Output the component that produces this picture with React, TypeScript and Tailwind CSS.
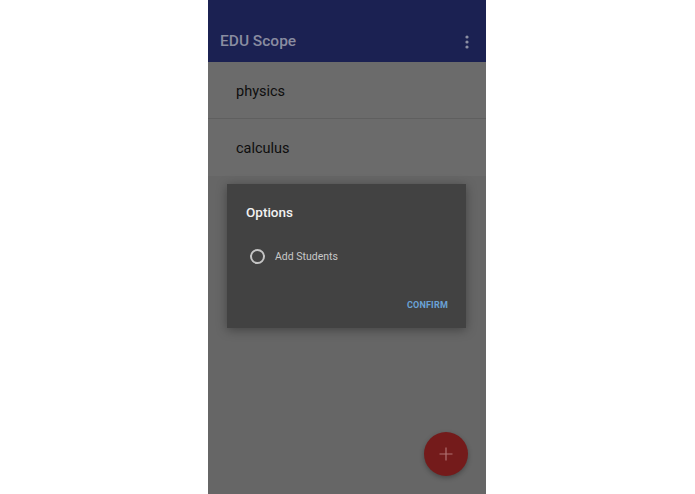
import React from "react";

export default function App() {
  return (
    <div className="w-full h-[494px] bg-white flex justify-center pr-px" style={{ fontFamily: "Roboto, 'Liberation Sans', sans-serif" }}>
      <div className="relative w-[278px] h-full bg-[#666666] flex flex-col">
        <div className="h-[62px] bg-[#1b2152] flex flex-col justify-end shrink-0">
          <div className="h-[42px] flex items-center justify-between pl-[12px] pr-[17px] pt-[1px]">
            <span className="text-[15.5px] font-medium text-[#898ca0]">EDU Scope</span>
            <svg width="4" height="14" viewBox="0 0 4 14">
              <circle cx="2" cy="2" r="1.6" fill="#8c8fa3" />
              <circle cx="2" cy="7" r="1.6" fill="#8c8fa3" />
              <circle cx="2" cy="12" r="1.6" fill="#8c8fa3" />
            </svg>
          </div>
        </div>
        <div className="h-[57px] bg-[#6b6b6b] border-b border-[#5f5f5f] flex items-center pl-[28px] pt-[3px]">
          <span className="text-[14.5px] text-[#0e0e0e]">physics</span>
        </div>
        <div className="h-[57px] bg-[#6b6b6b] flex items-center pl-[28px] pt-[3px]">
          <span className="text-[14.5px] text-[#0e0e0e]">calculus</span>
        </div>
        <div className="flex-1 bg-[#666666]" />

        <div className="absolute left-[19px] top-[184px] w-[239px] h-[144px] bg-[#424242] shadow-[0_2px_10px_rgba(0,0,0,0.35)] flex flex-col">
          <div className="pl-[19px] pt-[19px] text-[13.5px] font-medium text-[#f2f2f2] leading-[18px]">Options</div>
          <div className="flex items-center pl-[23px] mt-[27px]">
            <div className="w-[15px] h-[15px] rounded-full border-2 border-[#c4c4c4]" />
            <span className="ml-[10px] text-[10.5px] text-[#c8c8c8] pt-px">Add Students</span>
          </div>
          <div className="flex-1 flex items-end justify-end pr-[18px] pb-[16px]">
            <span className="text-[9px] font-bold text-[#6aa3d6] tracking-[0.2px]">CONFIRM</span>
          </div>
        </div>

        <div className="absolute left-[216px] top-[432px] w-[44px] h-[44px] rounded-full bg-[#741b1b] shadow-[0_2px_5px_rgba(0,0,0,0.3)] flex items-center justify-center">
          <svg width="14" height="14" viewBox="0 0 14 14">
            <path d="M7 0.5V13.5M0.5 7H13.5" stroke="#b07272" strokeWidth="1.2" />
          </svg>
        </div>
      </div>
    </div>
  );
}
